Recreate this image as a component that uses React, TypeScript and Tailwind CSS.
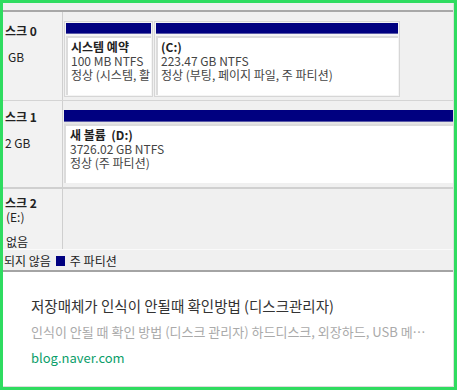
const KR = "font-['Noto_Sans_CJK_KR','Noto_Sans',sans-serif]";

function Partition({ width, lines }: { width: string; lines: [string, string, string] }) {
  return (
    <div className={`${width} flex flex-col shrink-0 border border-[#d6d6d6] bg-[#f4f4f4] p-px`}>
      <div className="h-[11px] bg-[#000080] border-b border-[#5a5aa8]" />
      <div className="h-[2px]" />
      <div className="flex-1 bg-white border-l-2 border-t-2 border-[#dcdcdc] pl-[3px] pt-[2px] text-[12px] leading-[14px] text-[#444] whitespace-nowrap overflow-hidden">
        <div className="font-bold text-[#222]">{lines[0]}</div>
        <div>{lines[1]}</div>
        <div>{lines[2]}</div>
      </div>
    </div>
  );
}

function DiskLabel({ children }: { children: React.ReactNode }) {
  return (
    <div className="w-[60px] h-full shrink-0 border-r border-[#cfcfcf] bg-[#f2f2f2] text-[12px] leading-[14px] text-[#222] overflow-hidden">
      {children}
    </div>
  );
}

export default function App() {
  return (
    <div className={`w-[457px] h-[390px] bg-white ${KR}`}>
      <div className="w-full h-full border-[3px] border-[#2fdc60] flex flex-col">
        <div className="flex-1 flex flex-col border-r border-b border-[#dcdcdc] overflow-hidden">
          {/* disk management capture */}
          <div className="h-[269px] shrink-0 flex flex-col bg-[#f0f0f0] border-b-2 border-[#a4a4a4]">
            <div className="h-[7px] bg-[#f0f0f0]" />
            <div className="h-[2px] bg-[#a8a8a8]" />

            {/* disk 0 */}
            <div className="h-[90px] flex border-b border-[#d4d4d4]">
              <DiskLabel>
                <div className="pt-[12px] pl-[2px] font-bold">스크 0</div>
                <div className="pt-[12px] pl-[5px]">GB</div>
              </DiskLabel>
              <div className="flex-1 flex gap-[1px] pl-[1px] pt-[9px] pb-[3px]">
                <Partition width="w-[89px]" lines={["시스템 예약", "100 MB NTFS", "정상 (시스템, 활"]} />
                <Partition width="w-[246px]" lines={["  (C:)", "223.47 GB NTFS", "정상 (부팅, 페이지 파일, 주 파티션)"]} />
              </div>
            </div>

            {/* disk 1 */}
            <div className="h-[89px] flex border-b-2 border-[#d0d0d0]">
              <DiskLabel>
                <div className="pt-[9px] pl-[2px] font-bold">스크 1</div>
                <div className="pt-[12px] pl-[2px]">2 GB</div>
              </DiskLabel>
              <div className="flex-1 flex flex-col pl-[1px] pt-[9px] pb-[4px]">
                <div className="h-[12px] bg-[#000080] border-b border-[#5a5aa8]" />
                <div className="h-[2px] bg-[#e4e4e4]" />
                <div className="flex-1 bg-white border-l-2 border-t-2 border-[#dcdcdc] pl-[4px] pt-[2px] text-[12px] leading-[14px] text-[#444]">
                  <div className="font-bold text-[#222]">새 볼륨&nbsp;&nbsp;(D:)</div>
                  <div>3726.02 GB NTFS</div>
                  <div>정상 (주 파티션)</div>
                </div>
              </div>
            </div>

            {/* disk 2 */}
            <div className="h-[62px] flex border-b border-[#fafafa]">
              <DiskLabel>
                <div className="pt-[7px] pl-[2px] font-bold">스크 2</div>
                <div className="pl-[3px]">(E:)</div>
                <div className="pt-[11px] pl-[3px]">없음</div>
              </DiskLabel>
              <div className="flex-1" />
            </div>

            {/* legend */}
            <div className="flex-1 flex items-center pt-[2px] text-[12px] text-[#222] pl-[1px]">
              <span>되지 않음</span>
              <span className="ml-[5px] w-[9px] h-[10px] bg-[#000080]" />
              <span className="ml-[5px]">주 파티션</span>
            </div>
          </div>

          {/* text */}
          <div className="flex-1 flex flex-col pl-[28px] pt-[24px]">
            <div className="text-[14.5px] leading-[20px] text-[#333]">저장매체가 인식이 안될때 확인방법 (디스크관리자)</div>
            <div className="mt-[7px] text-[13px] leading-[18px] text-[#aaa] whitespace-nowrap">
              인식이 안될 때 확인 방법 (디스크 관리자) 하드디스크, 외장하드, USB 메⋯
            </div>
            <div className="mt-[8px] text-[13px] leading-[18px] text-[#0b9e6a]">blog.naver.com</div>
          </div>
        </div>
      </div>
    </div>
  );
}
